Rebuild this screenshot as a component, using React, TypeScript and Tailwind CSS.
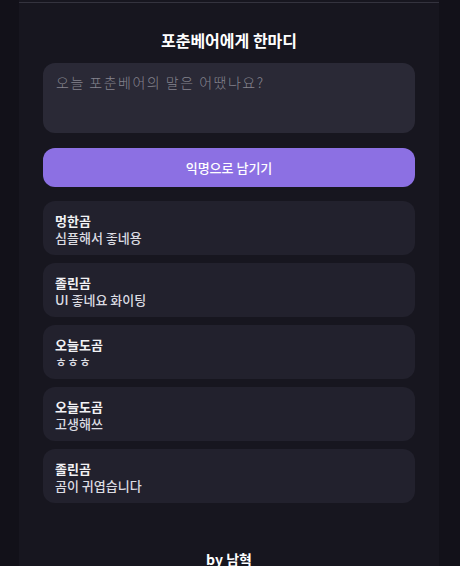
import React from "react";

const comments = [
  { name: "멍한곰", msg: "심플해서 좋네용" },
  { name: "졸린곰", msg: "UI 좋네요 화이팅" },
  { name: "오늘도곰", msg: "ㅎㅎㅎ" },
  { name: "오늘도곰", msg: "고생해쓰" },
  { name: "졸린곰", msg: "곰이 귀엽습니다" },
];

export default function App() {
  return (
    <div
      className="min-h-[566px] w-full bg-[#121119] flex pl-[19px]"
      style={{ fontFamily: '"Noto Sans CJK KR", "Noto Sans", sans-serif' }}
    >
      <div className="w-[420px] bg-[#17161f] pt-[2px] flex flex-col">
        <div className="h-px bg-[#34333e]" />
        <div className="px-6 flex flex-col">
          <h1 className="mt-[26px] text-center text-[16px] leading-[22px] font-bold text-white">
            포춘베어에게 한마디
          </h1>
          <textarea
            className="mt-[12px] h-[70px] w-full resize-none rounded-[12px] bg-[#2a2936] px-[13px] py-[10px] text-[14px] leading-[18px] tracking-[1.5px] font-light text-white placeholder:text-[#85848e] outline-none"
            placeholder="오늘 포춘베어의 말은 어땠나요?"
          />
          <button className="mt-[15px] h-[39px] w-full rounded-[12px] bg-[#8c70e3] text-[13px] font-medium text-white">
            익명으로 남기기
          </button>
          <div className="mt-[14px] flex flex-col gap-2">
            {comments.map((c, i) => (
              <div
                key={i}
                className="h-[54px] rounded-[12px] bg-[#22212d] px-3 pt-[11px] pb-[9px] flex flex-col"
              >
                <div className="text-[13px] leading-[17px] font-bold text-[#f2f2f5]">{c.name}</div>
                <div className="text-[13px] leading-[17px] font-medium text-[#dcdce2]">{c.msg}</div>
              </div>
            ))}
          </div>
          <div className="mt-[46px] text-center text-[14px] leading-[20px] font-bold text-white pb-4">
            by 남혁
          </div>
        </div>
      </div>
    </div>
  );
}
